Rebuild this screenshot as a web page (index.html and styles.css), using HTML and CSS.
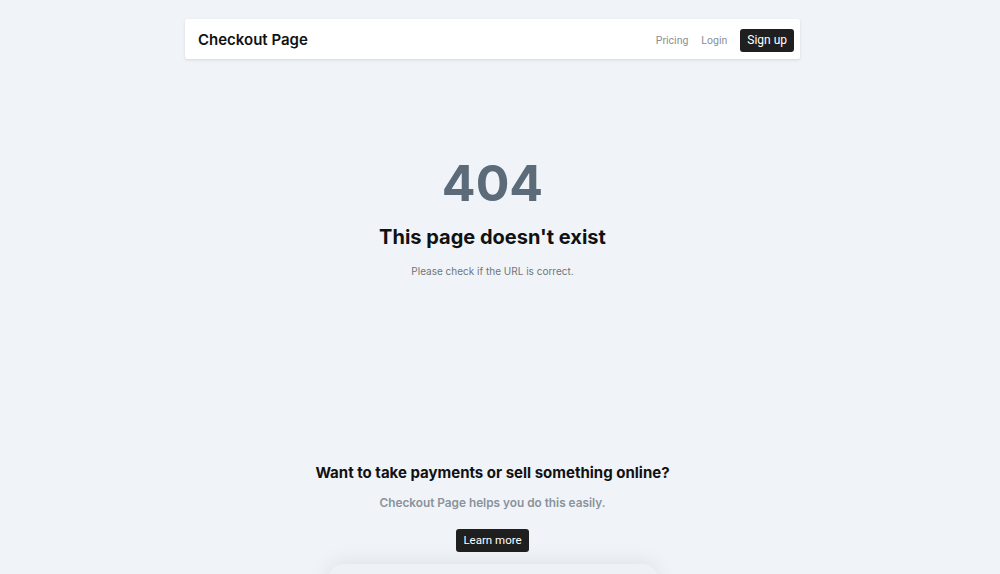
FILE: index.html
```html
<!DOCTYPE html>
<html lang="en">
<head>
    <meta charset="UTF-8">
    <meta name="viewport" content="width=device-width, initial-scale=1.0">
    <title>Checkout Page - Not found</title>
    <link rel="stylesheet" href="styles.css">
</head>
<body>
    <div class="page">
        <!-- Barra superior -->
        <header class="navbar">
            <a class="brand" href="#">Checkout Page</a>
            <nav class="nav-links">
                <a class="link" href="#">Pricing</a>
                <a class="link" href="#">Login</a>
                <a class="btn" href="#">Sign up</a>
            </nav>
        </header>

        <!-- Error 404 -->
        <main class="not-found">
            <div class="code">404</div>
            <h1>This page doesn't exist</h1>
            <p>Please check if the URL is correct.</p>
        </main>

        <!-- Promo -->
        <section class="promo">
            <h2>Want to take payments or sell something online?</h2>
            <p>Checkout Page helps you do this easily.</p>
            <a class="btn" href="#">Learn more</a>
            <div class="preview"></div>
        </section>
    </div>
</body>
</html>
```

FILE: styles.css
```css
body {
    margin: 0;
    padding-right: 15px;
    font-family: Inter, "Noto Sans", sans-serif;
    background-color: #f0f4f8;
    color: #111;
}
a {
    text-decoration: none;
}
.page {
    width: 615px;
    margin: 0 auto;
    padding-top: 19px;
}
.navbar {
    display: flex;
    justify-content: space-between;
    align-items: center;
    height: 40px;
    padding: 0 6px 0 13px;
    background-color: #fff;
    border-radius: 2px;
    box-shadow: 0 1px 3px rgba(0, 0, 0, 0.12);
}
.brand {
    color: #111;
    font-size: 15px;
    font-weight: 600;
}
.nav-links {
    display: flex;
    align-items: center;
    gap: 13px;
    padding-top: 2px;
    font-family: Roboto, sans-serif;
}
.nav-links .link {
    color: #8a8f96;
    font-size: 10.5px;
    padding-top: 1px;
}
.btn {
    display: inline-block;
    background-color: #1f1f1f;
    color: #fff;
    font-family: Roboto, sans-serif;
    font-size: 12px;
    line-height: 23px;
    padding: 0 7px;
    border-radius: 3px;
}
.not-found {
    text-align: center;
    padding-top: 94px;
}
.code {
    font-size: 50px;
    font-weight: 700;
    line-height: 60px;
    color: #5b6b79;
}
.not-found h1 {
    margin: 11px 0 0;
    font-size: 20px;
    font-weight: 700;
    line-height: 26px;
}
.not-found p {
    margin: 15px 0 0;
    font-size: 10px;
    color: #6f747a;
}
.promo {
    text-align: center;
    margin-top: 185px;
}
.promo h2 {
    margin: 0;
    font-size: 15px;
    font-weight: 700;
    line-height: 22px;
}
.promo p {
    margin: 12px 0 0;
    font-size: 11.8px;
    font-weight: 600;
    color: #8a929b;
}
.promo .btn {
    margin-top: 19px;
    font-size: 11.5px;
}
.preview {
    width: 330px;
    height: 200px;
    margin: 12px auto 0;
    background-color: #eef2f6;
    border-radius: 16px;
    box-shadow: 0 -2px 20px rgba(0, 0, 0, 0.08);
}
```
